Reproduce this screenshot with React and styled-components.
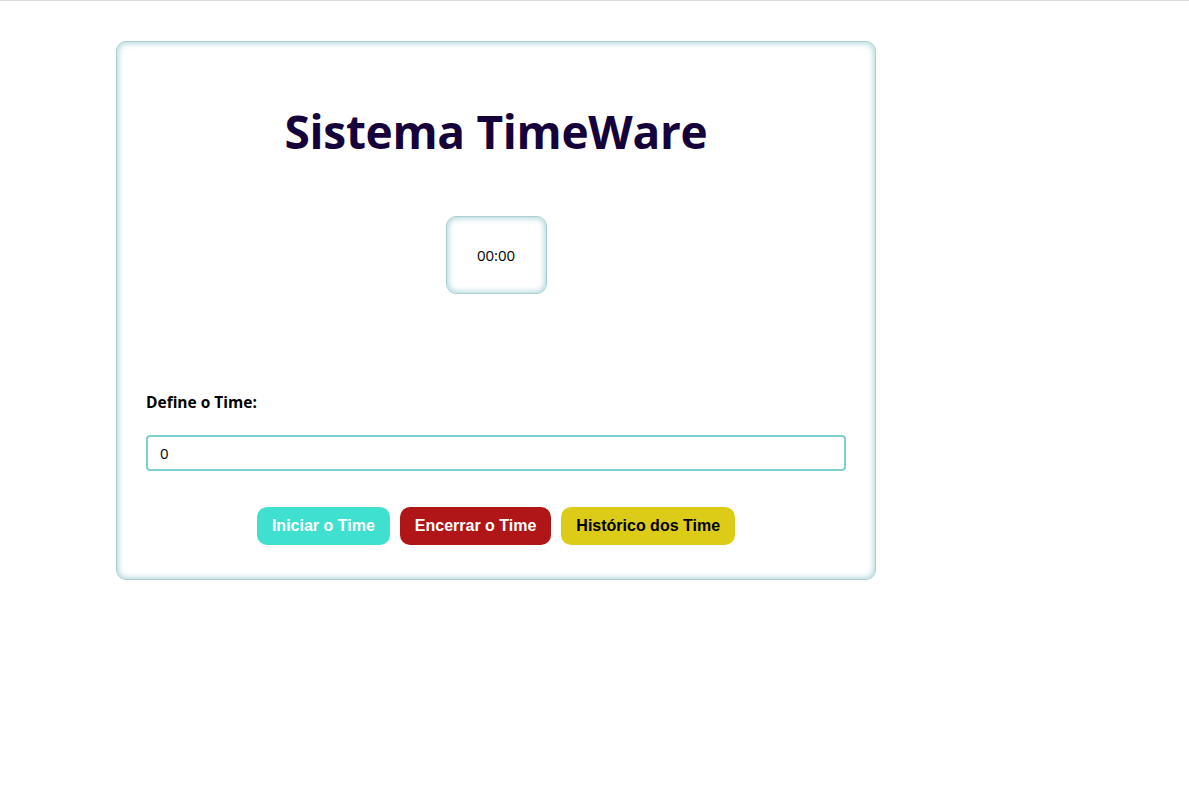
import React from "react";
import styled, { createGlobalStyle } from "styled-components";

const Global = createGlobalStyle`
  html, body { margin: 0; padding: 0; background: #fff; }
  body { font-family: "Open Sans", "Noto Sans", sans-serif; }
  * { box-sizing: border-box; }
`;

const TopRule = styled.div`
  height: 1px;
  background: #dcdcdc;
`;

const Card = styled.main`
  width: 760px;
  margin: 40px 0 0 116px;
  padding: 30px 29px 34px;
  border: 1px solid #a9cfd3;
  border-radius: 10px;
  box-shadow: inset 0 0 6px 1px #a7d0d5;
  display: flex;
  flex-direction: column;
`;

const Title = styled.h1`
  margin: 31px 0 0;
  text-align: center;
  font-family: "Open Sans", sans-serif;
  font-weight: 700;
  font-size: 46px;
  line-height: 56px;
  color: #15023b;
  letter-spacing: -0.3px;
`;

const TimerBox = styled.div`
  align-self: center;
  margin-top: 57px;
  width: 101px;
  height: 78px;
  border: 1px solid #a9cfd3;
  border-radius: 10px;
  box-shadow: inset 0 0 6px 1px #a7d0d5;
  display: flex;
  align-items: center;
  justify-content: center;
  font-family: "Open Sans", sans-serif;
  font-size: 15px;
  color: #000;
`;

const Label = styled.label`
  margin-top: 98px;
  font-family: "Open Sans", sans-serif;
  font-weight: 700;
  font-size: 15.5px;
  line-height: 20px;
  color: #000;
`;

const Input = styled.input`
  margin-top: 23px;
  width: 100%;
  height: 36px;
  padding: 0 12px;
  border: 2px solid #7fd0d3;
  border-radius: 4px;
  font-family: "Open Sans", sans-serif;
  font-size: 15px;
  color: #000;
  outline: none;
`;

const Actions = styled.div`
  margin-top: 36px;
  display: flex;
  justify-content: center;
  gap: 10px;
`;

const Button = styled.button`
  height: 38px;
  padding: 0 15px;
  border: none;
  border-radius: 10px;
  background: ${(p) => p.$bg};
  color: ${(p) => p.$fg};
  font-family: "Liberation Sans", Arial, sans-serif;
  font-weight: 700;
  font-size: 16px;
  cursor: pointer;
`;

export default function App() {
  return (
    <>
      <Global />
      <TopRule />
      <Card>
        <Title>Sistema TimeWare</Title>
        <TimerBox>00:00</TimerBox>
        <Label htmlFor="time">Define o Time:</Label>
        <Input id="time" defaultValue="0" />
        <Actions>
          <Button $bg="#40e0d0" $fg="#ffffff">Iniciar o Time</Button>
          <Button $bg="#b01518" $fg="#ffffff">Encerrar o Time</Button>
          <Button $bg="#dccc18" $fg="#000000">Histórico dos Time</Button>
        </Actions>
      </Card>
    </>
  );
}
